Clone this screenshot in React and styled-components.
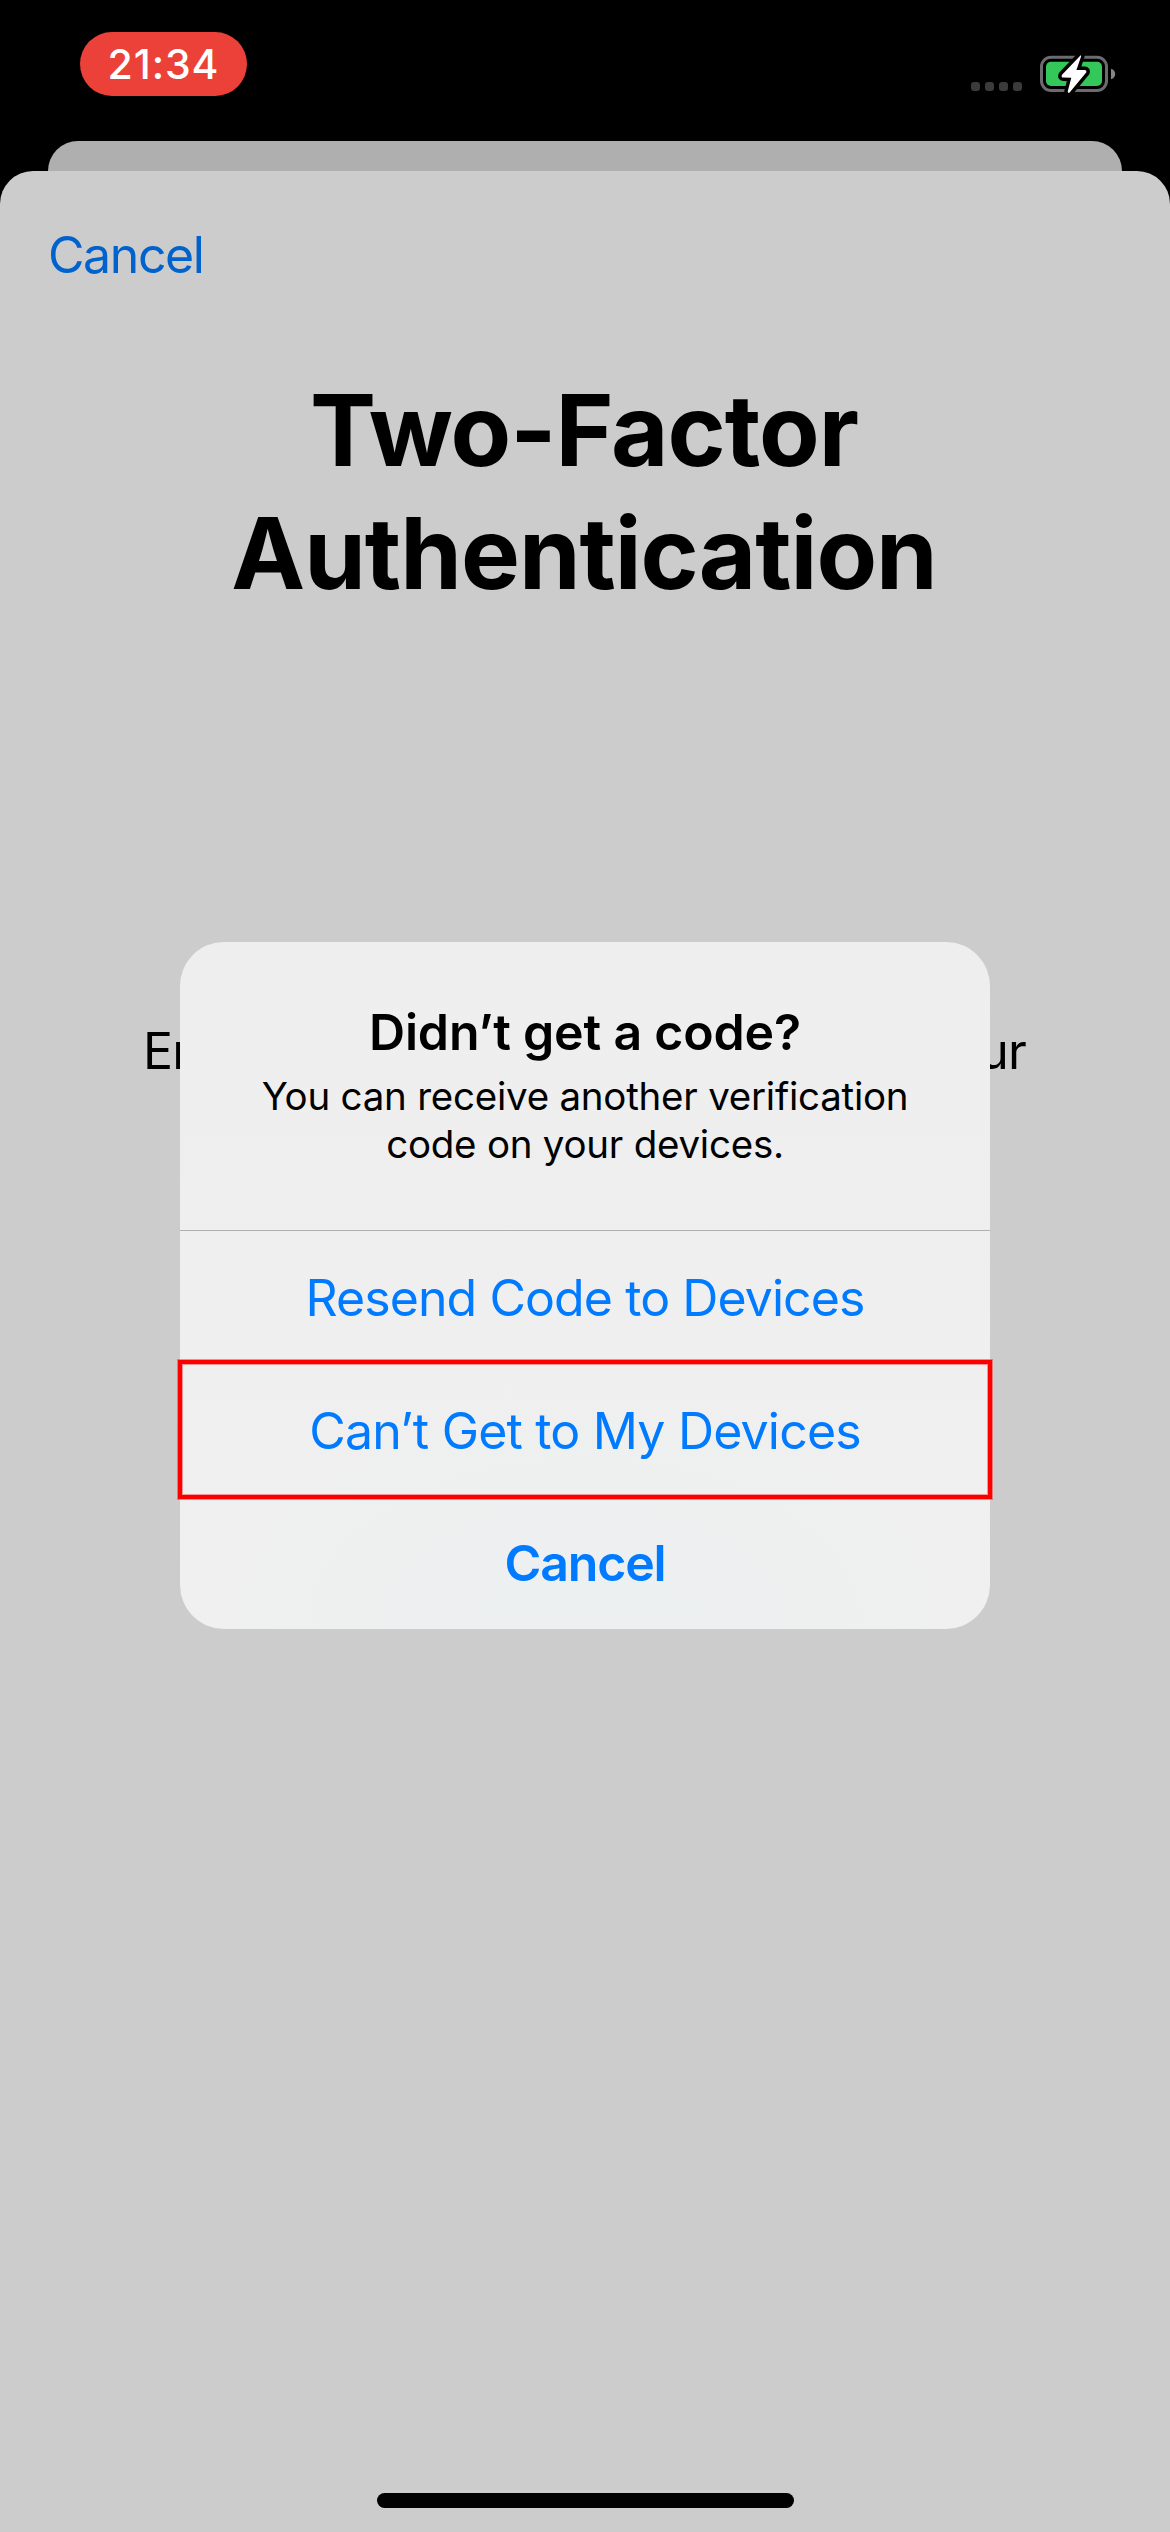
import React from "react";
import styled, { createGlobalStyle } from "styled-components";

const GlobalStyle = createGlobalStyle`
  * {
    box-sizing: border-box;
  }

  body {
    margin: 0;
    background: #000;
    font-family: Inter, Roboto, "Liberation Sans", sans-serif;
  }

  h1, h2, p {
    margin: 0;
  }

  button {
    margin: 0;
    padding: 0;
    border: 0;
    background: none;
    font: inherit;
  }
`;

const Screen = styled.div`
  position: relative;
  display: flex;
  flex-direction: column;
  width: 1170px;
  height: 2532px;
  overflow: hidden;
  background: #000;
`;

const StatusBar = styled.header`
  display: flex;
  flex: none;
  justify-content: space-between;
  align-items: flex-start;
  height: 141px;
  padding: 32px 54px 0 80px;
`;

const TimePill = styled.div`
  display: flex;
  align-items: center;
  justify-content: center;
  width: 167px;
  height: 64px;
  border-radius: 32px;
  background: #eb4138;
  color: #fff;
  font-size: 41px;
  font-weight: 500;
  letter-spacing: 0.9px;
`;

const StatusIcons = styled.div`
  display: flex;
  align-items: flex-start;
  gap: 16px;
  padding-top: 20px;
`;

const SignalDots = styled.div`
  display: flex;
  gap: 5px;
  padding-top: 30px;
`;

const Dot = styled.span`
  width: 9px;
  height: 9px;
  border-radius: 3px;
  background: #3b3b3b;
`;

const BackSheet = styled.div`
  flex: none;
  height: 30px;
  margin: 0 48px;
  border-radius: 30px 30px 0 0;
  background: #afafaf;
`;

const Sheet = styled.main`
  display: flex;
  flex: 1;
  flex-direction: column;
  padding: 54px 48px 24px;
  border-radius: 33px 33px 0 0;
  background: #ccc;
`;

const NavButton = styled.button`
  align-self: flex-start;
  color: #0062cc;
  font-size: 50px;
  line-height: 60px;
  letter-spacing: -1.4px;
`;

const PageTitle = styled.h1`
  margin-top: 84px;
  padding-right: 2px;
  color: #000;
  font-size: 99px;
  font-weight: 700;
  line-height: 123px;
  letter-spacing: -1px;
  text-align: center;
`;

const Instructions = styled.p`
  display: flex;
  justify-content: space-between;
  margin-top: 406px;
  padding: 0 96px 0 95px;
  color: #000;
  font-size: 50px;
  line-height: 60px;
  letter-spacing: -0.87px;
`;

const HomeIndicator = styled.div`
  align-self: center;
  width: 417px;
  height: 15px;
  margin-top: auto;
  border-radius: 8px;
  background: #000;
`;

const Alert = styled.section`
  position: absolute;
  top: 942px;
  left: 180px;
  display: flex;
  flex-direction: column;
  width: 810px;
  height: 687px;
  border-radius: 44px;
  background:
    radial-gradient(ellipse 360px 220px at 50% 100%, #ecf0f1, rgba(236, 240, 241, 0)),
    linear-gradient(#eeeeee, #efefef 50%, #eff0ef);
`;

const AlertHeader = styled.div`
  display: flex;
  flex: none;
  flex-direction: column;
  gap: 10px;
  height: 289px;
  padding: 60px 48px 0;
  border-bottom: 1px solid #b0b0b0;
  color: #000;
  text-align: center;
`;

const AlertTitle = styled.h2`
  font-size: 50px;
  font-weight: 600;
  line-height: 60px;
  letter-spacing: -0.18px;
`;

const AlertMessage = styled.p`
  font-size: 38.5px;
  line-height: 48px;
  letter-spacing: -0.24px;
`;

const Action = styled.button`
  position: relative;
  display: flex;
  flex: none;
  align-items: center;
  justify-content: center;
  height: ${(p) => (p.$bold ? 132 : 133)}px;
  padding-top: ${(p) => (p.$bold ? 0 : 1)}px;
  color: #007aff;
  font-size: 50px;
  font-weight: ${(p) => (p.$bold ? 600 : 400)};
  letter-spacing: ${(p) => p.$tracking}px;
`;

const Highlight = styled.span`
  position: absolute;
  top: -4px;
  right: -2px;
  bottom: -2px;
  left: -2px;
  border: 4px solid #fc0000;
  box-shadow: 0 0 0 1px rgba(252, 40, 40, 0.5), inset 0 0 0 1px rgba(255, 60, 60, 0.5);
`;

function ChargingBattery() {
  const bolt =
    "M42.7 3.3 L24 22.7 Q22.8 25.5 25.4 25.6 L33.3 25.7 L29.7 39.6 Q30 41.6 31.6 40.6 L48.2 20.6 Q49 18.2 46.8 18 L38.4 18 L42.9 4.9 Q43.4 3.2 42.7 3.3 Z";
  return (
    <svg width="78" height="44" viewBox="0 0 78 44" aria-hidden="true">
      <rect x="3.5" y="5.2" width="65" height="33.3" rx="9.5" fill="none" stroke="#6c6c70" strokeWidth="3" />
      <rect x="8" y="9.8" width="56" height="24.2" rx="5" fill="#34c759" />
      <path d="M73 16.8 Q77.2 18 77.2 22 Q77.2 26 73 27.2 Z" fill="#858585" />
      <path d={bolt} fill="none" stroke="#000" strokeWidth="7" strokeLinejoin="round" />
      <path d={bolt} fill="#fff" />
    </svg>
  );
}

export default function App() {
  return (
    <>
      <GlobalStyle />
      <Screen>
        <StatusBar>
          <TimePill>21:34</TimePill>
          <StatusIcons>
            <SignalDots>
              <Dot />
              <Dot />
              <Dot />
              <Dot />
            </SignalDots>
            <ChargingBattery />
          </StatusIcons>
        </StatusBar>
        <BackSheet />
        <Sheet>
          <NavButton>Cancel</NavButton>
          <PageTitle>
            Two-Factor
            <br />
            Authentication
          </PageTitle>
          <Instructions>
            <span>En</span>
            <span>ur</span>
          </Instructions>
          <HomeIndicator />
        </Sheet>
        <Alert role="alertdialog">
          <AlertHeader>
            <AlertTitle>Didn’t get a code?</AlertTitle>
            <AlertMessage>
              You can receive another verification
              <br />
              code on your devices.
            </AlertMessage>
          </AlertHeader>
          <Action $tracking={-0.92}>Resend Code to Devices</Action>
          <Action $tracking={-0.81}>
            Can’t Get to My Devices
            <Highlight />
          </Action>
          <Action $bold $tracking={-1.17}>
            Cancel
          </Action>
        </Alert>
      </Screen>
    </>
  );
}
